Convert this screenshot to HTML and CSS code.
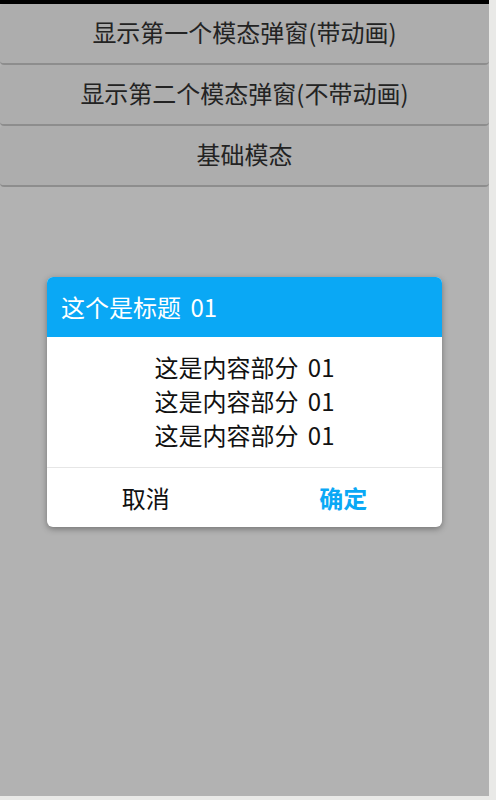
FILE: index.html
```html
<!DOCTYPE html>
<html lang="zh">
<head>
<meta charset="utf-8">
<link rel="stylesheet" href="styles.css">
</head>
<body>
<div class="screen">
  <div class="list">
    <div class="btn">显示第一个模态弹窗(带动画)</div>
    <div class="btn">显示第二个模态弹窗(不带动画)</div>
    <div class="btn">基础模态</div>
  </div>
  <div class="mask">
    <div class="modal">
      <div class="modal-head">这个是标题 01</div>
      <div class="modal-body">
        <div>这是内容部分 01</div>
        <div>这是内容部分 01</div>
        <div>这是内容部分 01</div>
      </div>
      <div class="modal-foot">
        <div class="act cancel">取消</div>
        <div class="act ok">确定</div>
      </div>
    </div>
  </div>
</div>
</body>
</html>
```
FILE: styles.css
```css
html, body {
  margin: 0;
  padding: 0;
  background: #e9e9e7;
}
body {
  width: 496px;
  height: 800px;
  font-family: "Noto Sans CJK SC", "Noto Sans", sans-serif;
}
.screen {
  position: relative;
  width: 489px;
  height: 792px;
  border-top: 4px solid #000;
  background: #ffffff;
  overflow: hidden;
}
.list {
  display: flex;
  flex-direction: column;
}
.btn {
  height: 55px;
  padding-bottom: 4px;
  border-bottom: 2px solid #cbcbcb;
  border-radius: 4px;
  display: flex;
  align-items: center;
  justify-content: center;
  font-size: 24px;
  color: #333;
  background: #f8f8f8;
}
.mask {
  position: absolute;
  inset: 0;
  background: rgba(0, 0, 0, 0.3);
  display: flex;
  align-items: center;
  justify-content: center;
}
.modal {
  width: 395px;
  margin-top: 3px;
  background: #fff;
  border-radius: 6px;
  overflow: hidden;
  box-shadow: 0 2px 6px rgba(0, 0, 0, 0.35);
}
.modal-head {
  height: 60px;
  background: #0aa8f5;
  color: #fff;
  font-size: 24px;
  word-spacing: 4px;
  display: flex;
  align-items: center;
  padding-left: 14px;
}
.modal-body {
  padding: 13px 0 15px;
  text-align: center;
  font-size: 24px;
  word-spacing: 4px;
  line-height: 34px;
  color: #111;
  border-bottom: 1px solid #e6e6e6;
}
.modal-foot {
  display: flex;
  height: 59px;
}
.act {
  flex: 1;
  display: flex;
  align-items: center;
  justify-content: center;
  font-size: 24px;
}
.cancel { color: #111; }
.ok { color: #0aa8f5; font-weight: bold; }
```
